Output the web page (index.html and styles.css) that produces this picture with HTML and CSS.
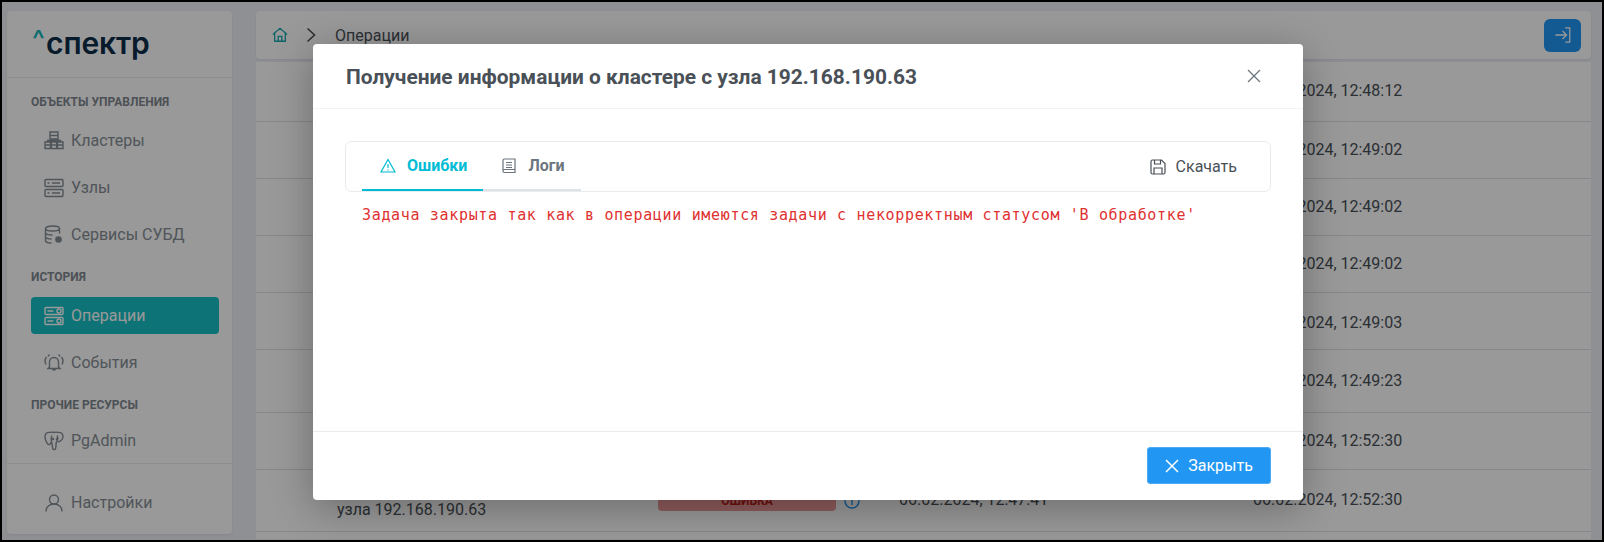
FILE: index.html
```html
<!DOCTYPE html>
<html lang="ru">
<head>
<meta charset="utf-8">
<title>Операции</title>
<link rel="stylesheet" href="styles.css">
</head>
<body>
<div class="frame">
  <div class="app">
    <aside class="sidebar">
      <div class="logo"><span class="logo-caret">^</span><span class="logo-word">спектр</span></div>
      <nav class="nav">
        <div class="nav-title">Объекты управления</div>
        <a class="nav-item">
          <svg class="nav-icon" viewBox="0 0 20 20"><path d="M6 1h8v7H6zM6 4.500h8M1 11h5.500v6.500H1zM1 14h5.500M7.250 11h5.500v6.500h-5.500zM7.250 14h5.500M13.500 11H19v6.500h-5.500zM13.500 14H19M3.500 11V9.500h13V11M10 8v3"/></svg>
          <span>Кластеры</span>
        </a>
        <a class="nav-item">
          <svg class="nav-icon" viewBox="0 0 20 20"><rect x="1" y="1.500" width="18" height="7" rx="1"/><rect x="1" y="11.500" width="18" height="7" rx="1"/><path d="M3.500 5h2M8 5h8M3.500 15h2M8 15h8"/></svg>
          <span>Узлы</span>
        </a>
        <a class="nav-item">
          <svg class="nav-icon" viewBox="0 0 20 20"><ellipse cx="8.500" cy="3.500" rx="7" ry="2.500"/><path d="M1.500 3.500v12c0 1.500 3 2.500 6 2.500M15.500 3.500v5M1.500 7.500c0 1.500 3 2.500 7 2.500M1.500 11.500c0 1.500 3 2.500 6 2.500"/><circle class="fill" cx="14.500" cy="14.500" r="4"/></svg>
          <span>Сервисы СУБД</span>
        </a>
        <div class="nav-title nav-title-next">История</div>
        <a class="nav-item active">
          <svg class="nav-icon" viewBox="0 0 20 20"><rect x="1" y="1.500" width="18" height="7" rx="1"/><rect x="1" y="11.500" width="18" height="7" rx="1"/><path d="M3.500 5h6M3.500 15h6"/><circle cx="15" cy="5" r="2"/><circle cx="15" cy="15" r="2"/></svg>
          <span>Операции</span>
        </a>
        <a class="nav-item">
          <svg class="nav-icon" viewBox="0 0 20 20"><path d="M5.500 14V9a4.500 4.500 0 0 1 9 0v5l1.500 1.500H4zM8.500 15.500a1.500 1.500 0 0 0 3 0M2.500 4C1 6 .7 9 2 11.500M17.500 4c1.500 2 1.800 5 .5 7.500M5.500 1.500C4.800 2 4.300 2.700 4 3.500M14.500 1.500c.7.500 1.200 1.200 1.500 2"/></svg>
          <span>События</span>
        </a>
        <div class="nav-title nav-title-next nav-title-tight">Прочие ресурсы</div>
        <a class="nav-item nav-item-last">
          <svg class="nav-icon" viewBox="0 0 20 20"><path d="M6 1.500C3 1 1 2.500 1 5.500c0 3 2 7.500 3.500 8 1.500.5 2.500-1.500 2.500-2.500M14 1.500c3-.5 5 1 5 4 0 3-3 5-5 5.500M6 1.500c1-.5 2.500-.5 4 0 1.500-.5 3-.5 4 0M8 4.500c-1 2-1 4-.5 6 .5 2 1 4 1 6 0 1.500 1 2.500 2 2 1.500-.5 1.500-2 1.500-4 0-1.500 0-3 1-4.500 1-2 1-4 0-5.500"/><circle cx="9" cy="8" r=".6"/><circle cx="13" cy="8" r=".6"/></svg>
          <span>PgAdmin</span>
        </a>
      </nav>
      <div class="sidebar-foot">
        <a class="nav-item nav-item-last">
          <svg class="nav-icon" viewBox="0 0 20 20"><circle cx="10" cy="6.500" r="4.500"/><path d="M2 18.500c0-4.500 3.500-7.500 8-7.500s8 3 8 7.500"/></svg>
          <span>Настройки</span>
        </a>
      </div>
    </aside>
    <main class="main">
      <header class="topbar">
        <svg class="home" viewBox="0 0 18 18"><path d="M1 8.500 9 1.500l8 7M3 7v9h12V7M7 16v-5.500h4V16"/></svg>
        <svg class="crumb-sep" viewBox="0 0 10 16"><path d="M1.500 1.500 8.500 8l-7 6.500"/></svg>
        <span class="crumb">Операции</span>
        <button class="exit" type="button">
          <svg viewBox="0 0 20 20"><path d="M1.500 10h12M9.500 5.500l4.500 4.500-4.500 4.500M12.500 2h5v16h-5"/></svg>
        </button>
      </header>
      <section class="table">
        <div class="row row-1"><span class="cell-end">06.02.2024, 12:48:12</span></div>
        <div class="row row-2"><span class="cell-end">06.02.2024, 12:49:02</span></div>
        <div class="row row-2"><span class="cell-end">06.02.2024, 12:49:02</span></div>
        <div class="row row-2"><span class="cell-end">06.02.2024, 12:49:02</span></div>
        <div class="row row-3"><span class="cell-end">06.02.2024, 12:49:03</span></div>
        <div class="row row-4"><span class="cell-end">06.02.2024, 12:49:23</span></div>
        <div class="row row-5"><span class="cell-end">06.02.2024, 12:52:30</span></div>
        <div class="row row-full">
          <span class="cell-name">Получение информации о кластере с<br>узла 192.168.190.63</span>
          <span class="cell-status"><span class="badge">Ошибка</span><svg class="info" viewBox="0 0 16 16"><circle cx="8" cy="8" r="7"/><path d="M8 7v5M8 4v1.500"/></svg></span>
          <span class="cell-start">06.02.2024, 12:47:41</span>
          <span class="cell-end">06.02.2024, 12:52:30</span>
        </div>
      </section>
    </main>
  </div>

  <div class="backdrop"></div>

  <div class="modal">
    <header class="modal-head">
      <h2 class="modal-title">Получение информации о кластере с узла 192.168.190.63</h2>
      <svg class="modal-close" viewBox="0 0 14 14"><path d="M1 1l12 12M13 1 1 13"/></svg>
    </header>
    <div class="modal-body">
      <div class="tabs">
        <a class="tab tab-on">
          <svg viewBox="0 0 16 16"><path d="M8 1.500 15 14H1zM8 6v4M8 11.500v1"/></svg>
          <span>Ошибки</span>
        </a>
        <a class="tab">
          <svg viewBox="0 0 16 16"><path d="M14 11.500H3.500a1.500 1.500 0 0 0 0 3H14zM2 13V2.500A1.500 1.500 0 0 1 3.500 1H14v10.500M5 4.500h6M5 7h6M5 9.500h6"/></svg>
          <span>Логи</span>
        </a>
        <a class="download">
          <svg viewBox="0 0 16 16"><path d="M2.500 1h9L15 4.500v9a1.500 1.500 0 0 1-1.500 1.500h-11A1.500 1.500 0 0 1 1 13.500v-11A1.500 1.500 0 0 1 2.500 1zM4.500 1v4h6V1M4 15V9h8v6"/></svg>
          <span>Скачать</span>
        </a>
      </div>
      <pre class="error">Задача закрыта так как в операции имеются задачи с некорректным статусом 'В обработке'</pre>
    </div>
    <footer class="modal-foot">
      <button class="close-btn" type="button">
        <svg viewBox="0 0 14 14"><path d="M1 1l12 12M13 1 1 13"/></svg>
        <span>Закрыть</span>
      </button>
    </footer>
  </div>
</div>
</body>
</html>
```

FILE: styles.css
```css
* { box-sizing: border-box; }

html, body { margin: 0; padding: 0; }

body {
  width: 1604px;
  height: 542px;
  overflow: hidden;
  font-family: Roboto, "Liberation Sans", sans-serif;
  font-size: 16px;
  color: #495057;
}

.frame {
  position: relative;
  width: 1604px;
  height: 542px;
  border: 2px solid #000;
  overflow: hidden;
  background: #eef1f5;
}

.app {
  display: flex;
  gap: 24px;
  height: 100%;
  padding: 9px 11px 0 5px;
}

.sidebar {
  width: 225px;
  height: 523px;
  flex: none;
  display: flex;
  flex-direction: column;
  background: #fff;
  border-radius: 4px;
  box-shadow: 0 1px 3px rgba(0, 0, 0, .08);
}

.logo {
  height: 67px;
  flex: none;
  display: flex;
  align-items: center;
  padding: 0 0 2px 25px;
  border-bottom: 1px solid #e9ecef;
}

.logo-caret {
  color: #17b6bc;
  font: 500 27px/1 Inter, sans-serif;
  width: 14px;
  padding-bottom: 8px;
}

.logo-word {
  color: #0d2d4a;
  font: 600 30px/1 Inter, sans-serif;
  letter-spacing: -.1px;
}

.nav {
  flex: 1;
  padding: 17px 13px 0 24px;
}

.nav-title {
  height: 15px;
  margin-bottom: 12px;
  font-size: 12px;
  line-height: 15px;
  font-weight: 700;
  text-transform: uppercase;
  color: #808890;
}

.nav-title-next { margin-top: 17px; }
.nav-title-tight { margin-bottom: 9px; }

.nav-item {
  display: flex;
  align-items: center;
  gap: 7px;
  height: 37px;
  margin-bottom: 10px;
  padding-left: 13px;
  border-radius: 4px;
  color: #868e96;
}

.nav-item-last { margin-bottom: 0; }

.nav-icon {
  width: 20px;
  height: 20px;
  flex: none;
  fill: none;
  stroke: currentColor;
  stroke-width: 1.400;
}

.nav-icon .fill { fill: currentColor; stroke: #fff; }

.nav-item.active {
  background: #17c0c6;
  color: #fff;
}

.sidebar-foot {
  height: 71px;
  flex: none;
  padding: 20px 13px 0 24px;
  border-top: 1px solid #e9ecef;
}

.main {
  flex: 1;
  min-width: 0;
}

.topbar {
  display: flex;
  align-items: center;
  height: 48px;
  padding: 0 10px 0 16px;
  background: #fff;
  border-radius: 4px;
  box-shadow: 0 1px 3px rgba(0, 0, 0, .08);
}

.home {
  width: 16px;
  height: 16px;
  fill: none;
  stroke: #17a8ae;
  stroke-width: 1.500;
}

.crumb-sep {
  width: 10px;
  height: 16px;
  margin-left: 18px;
  fill: none;
  stroke: #495057;
  stroke-width: 1.600;
}

.crumb {
  margin-left: 19px;
  color: #495057;
}

.exit {
  margin-left: auto;
  width: 37px;
  height: 33px;
  padding: 0;
  border: 0;
  border-radius: 6px;
  background: #2196f3;
  display: flex;
  align-items: center;
  justify-content: center;
}

.exit svg {
  width: 18px;
  height: 18px;
  fill: none;
  stroke: #fff;
  stroke-width: 1.400;
}

.table {
  margin-top: 3px;
  background: #fff;
  height: 477px;
  overflow: hidden;
}

.row {
  border-bottom: 1px solid #dee2e6;
  display: grid;
  grid-template-columns: 81px 321px 241px 354px 1fr;
  align-items: center;
  line-height: 20px;
}

.row-1 { height: 60px; padding-bottom: 2px; }
.row-2 { height: 57px; }
.row-3 { height: 57px; padding-top: 3px; }
.row-4 { height: 63px; }
.row-5 { height: 57px; }
.row-full { height: 62px; padding-bottom: 2px; }

.cell-name { grid-column: 2; color: #495057; white-space: nowrap; }
.cell-status { grid-column: 3; display: flex; align-items: center; gap: 8px; padding-top: 2px; }
.cell-start { grid-column: 4; color: #495057; white-space: nowrap; }
.cell-end { grid-column: 5; color: #495057; white-space: nowrap; }

.badge {
  width: 178px;
  height: 20px;
  border-radius: 4px;
  background: #ef9a9a;
  color: #b71c1c;
  font-size: 12px;
  font-weight: 700;
  line-height: 20px;
  text-align: center;
  text-transform: uppercase;
}

.info {
  width: 16px;
  height: 16px;
  flex: none;
  fill: none;
  stroke: #2196f3;
  stroke-width: 1.400;
}

.backdrop {
  position: absolute;
  inset: 0;
  background: rgba(0, 0, 0, .4);
}

.modal {
  position: absolute;
  left: 311px;
  top: 42px;
  width: 990px;
  height: 456px;
  display: flex;
  flex-direction: column;
  background: #fff;
  border-radius: 4px;
  box-shadow: 0 8px 40px rgba(0, 0, 0, .3);
}

.modal-head {
  height: 65px;
  flex: none;
  display: flex;
  align-items: center;
  justify-content: space-between;
  padding: 0 42px 0 33px;
  border-bottom: 1px solid #f1f3f5;
}

.modal-title {
  margin: 0;
  padding-top: 2px;
  font-size: 20.920px;
  font-weight: 700;
  color: #495057;
}

.modal-close {
  width: 14px;
  height: 14px;
  fill: none;
  stroke: #6c757d;
  stroke-width: 1.300;
}

.modal-body {
  flex: 1;
  padding: 32px 32px 0;
}

.tabs {
  display: flex;
  align-items: stretch;
  height: 51px;
  padding: 0 16px;
  border: 1px solid #e9ecef;
  border-radius: 6px;
}

.tab {
  display: flex;
  align-items: center;
  gap: 11px;
  padding: 0 16px 0 18px;
  font-size: 16px;
  font-weight: 700;
  color: #6c757d;
  border-bottom: 2px solid #dee2e6;
}

.tab svg, .download svg {
  width: 16px;
  height: 16px;
  flex: none;
  fill: none;
  stroke: currentColor;
  stroke-width: 1.200;
}

.tab-on {
  color: #00bcd4;
  border-bottom-color: #00bcd4;
}

.download {
  display: flex;
  align-items: center;
  gap: 10px;
  margin-left: auto;
  padding-right: 17px;
  color: #495057;
}

.error {
  margin: 12px 0 0 17px;
  font-family: "DejaVu Sans Mono", monospace;
  font-size: 15px;
  line-height: 22px;
  letter-spacing: .665px;
  color: #e03131;
}

.modal-foot {
  height: 69px;
  flex: none;
  display: flex;
  justify-content: flex-end;
  align-items: flex-start;
  padding: 15px 32px 0 0;
  border-top: 1px solid #e9ecef;
}

.close-btn {
  display: flex;
  align-items: center;
  justify-content: center;
  gap: 9px;
  width: 124px;
  height: 37px;
  padding: 0;
  border: 1px solid #4dabf5;
  border-radius: 3px;
  background: #2196f3;
  color: #fff;
  font: 16px Roboto, sans-serif;
}

.close-btn svg {
  width: 14px;
  height: 14px;
  fill: none;
  stroke: #fff;
  stroke-width: 1.500;
}
```
